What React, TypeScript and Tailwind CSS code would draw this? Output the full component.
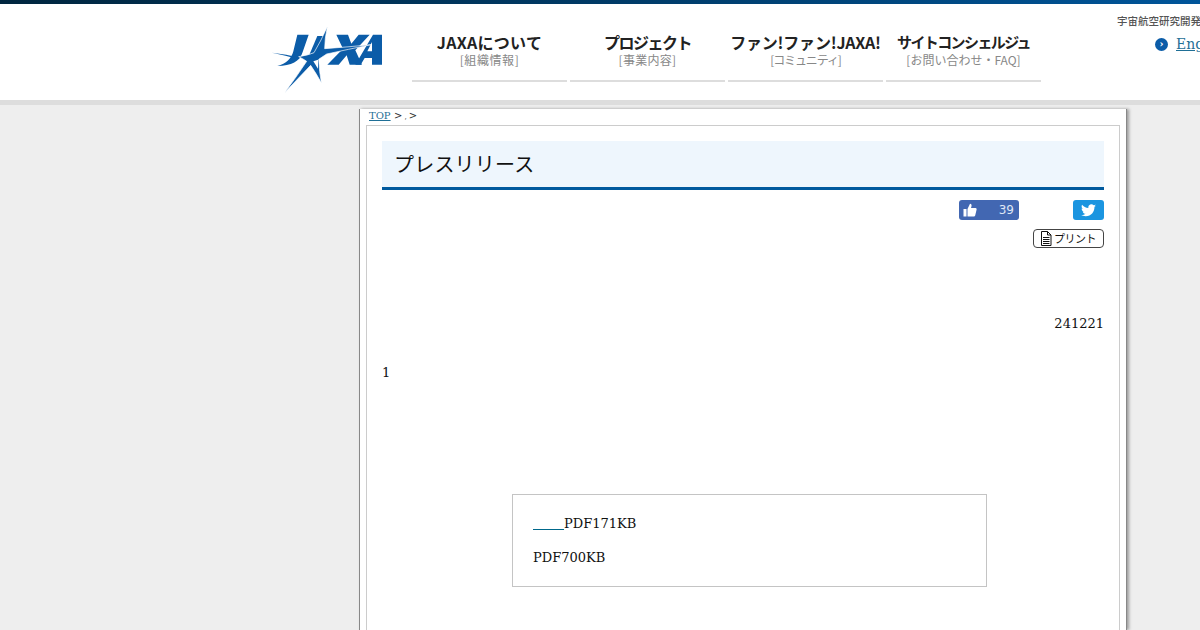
const navItems = [
  { title: "JAXAについて", sub: "[組織情報]", titleClass: "text-[16px] tracking-[0.3px]", subClass: "tracking-[0.6px]" },
  { title: "プロジェクト", sub: "[事業内容]", titleClass: "text-[16px] tracking-[-1.5px]", subClass: "tracking-[0.3px]" },
  { title: "ファン!ファン!JAXA!", sub: "[コミュニティ]", titleClass: "text-[16px] tracking-[-0.2px]", subClass: "tracking-[-1.1px]" },
  { title: "サイトコンシェルジュ", sub: "[お問い合わせ・FAQ]", titleClass: "text-[15px] tracking-[-1.6px]", subClass: "" },
];

const cjk = "font-['Noto_Sans_CJK_JP','Noto_Sans',sans-serif]";

function JaxaLogo() {
  return (
    <svg width="120" height="75" viewBox="0 0 360 225" className="block">
      <g fill="#0b5ca8" fillRule="evenodd">
        {/* J */}
        <path d="M88 38 H122 L104 90 C96 118 70 132 28 132 C55 125 70 110 76 88 Z" />
        <path d="M12 92 C40 95 70 100 95 108 L92 112 C65 104 40 98 12 92 Z" />
        {/* first A, left leg */}
        <path d="M148 42 L168 42 L166 84 L124 98 Z" />
        {/* X */}
        <path d="M205 38 H240 L250 65 L272 38 H305 L262 85 L282 128 H245 L236 100 L212 128 H178 L225 80 Z" />
        {/* second A */}
        <path d="M315 38 H342 V128 H312 V108 H290 L278 128 H262 Z M312 60 L298 88 H312 Z" />
      </g>
      <path
        d="M178 14 Q170 50 170 80 Q240 75 310 68 Q240 82 176 96 L152 112 Q154 150 160 182 Q145 155 128 130 Q90 170 50 212 Q85 165 116 118 Q105 110 92 104 Q120 100 138 92 Q160 55 178 14 Z"
        fill="#0b5ca8"
        stroke="#ffffff"
        strokeWidth="2"
      />
      <path d="M136 118 L150 113 L150 140 Z" fill="#ffffff" />
    </svg>
  );
}

function ThumbIcon() {
  return (
    <svg width="14" height="14" viewBox="0 0 14 14" fill="#ffffff">
      <rect x="0.5" y="6" width="3" height="7.5" />
      <path d="M4.500 6 L7 0.800 C8.400 0.800 8.800 2 8.500 3.200 L8 5 H12.500 C13.600 5 13.900 6 13.500 7 L12.200 12.500 C12 13.200 11.500 13.500 11 13.500 H4.500 Z" />
    </svg>
  );
}

function BirdIcon() {
  return (
    <svg width="15" height="13" viewBox="0 0 24 20" fill="#ffffff">
      <path d="M24 2.400c-.9.400-1.800.700-2.800.800 1-.600 1.800-1.600 2.200-2.700-1 .600-2 1-3.100 1.200C19.300.700 18 0 16.600 0c-2.700 0-4.900 2.200-4.900 4.900 0 .400 0 .800.100 1.100C7.700 5.800 4.100 3.900 1.700.900c-.4.700-.7 1.600-.7 2.500 0 1.700.9 3.200 2.200 4.100-.8 0-1.600-.2-2.200-.6v.1c0 2.400 1.700 4.400 3.900 4.800-.4.100-.8.200-1.300.2-.3 0-.6 0-.9-.1.600 2 2.400 3.400 4.600 3.400-1.700 1.300-3.800 2.100-6.100 2.100-.4 0-.8 0-1.200-.1C2.200 18.200 4.800 19 7.500 19c9.100 0 14-7.500 14-14v-.6c1-.7 1.800-1.600 2.500-2z" />
    </svg>
  );
}

function PrintIcon() {
  return (
    <svg width="12" height="15" viewBox="0 0 12 15" fill="none" stroke="#111111" strokeWidth="1">
      <path d="M1.500 0.500 H7.500 L11 4 V14.500 H1.500 Z" />
      <path d="M7.500 0.500 V4 H11" />
      <path d="M3 6.500 H9.500 M3 8.500 H9.500 M3 10.500 H9.500 M3 12.500 H9.500" />
    </svg>
  );
}

export default function App() {
  return (
    <div className="h-[630px] w-[1200px] overflow-hidden bg-[#eeeeee] font-['DejaVu_Serif',serif] text-[13px] text-[#111111]">
      <header className="h-[105px] border-b-[5px] border-[#dddddd] bg-white">
        <div className="h-1 bg-gradient-to-r from-[#00263f] via-[#003a66] to-[#00559a]" />
        <div className="flex w-[1300px] items-start pl-[268px]">
          <div className="mt-[18px] w-[144px]">
            <JaxaLogo />
          </div>
          <nav className={`mt-[26px] flex gap-[3px] ${cjk}`}>
            {navItems.map((item) => (
              <a key={item.title} className="block h-[52px] w-[155px] border-b-2 border-[#dddddd] text-center">
                <div className={`whitespace-nowrap leading-[24px] font-bold text-[#222222] ${item.titleClass}`}>
                  {item.title}
                </div>
                <div className={`whitespace-nowrap text-[12px] leading-[12px] text-[#888888] ${item.subClass}`}>
                  {item.sub}
                </div>
              </a>
            ))}
          </nav>
          <div className="ml-[76px] pt-[10px]">
            <div className={`whitespace-nowrap text-[10.5px] leading-[14px] font-medium text-[#555555] ${cjk}`}>
              宇宙航空研究開発機構
            </div>
            <div className="mt-[6px] flex items-center gap-[8px] pl-[38px]">
              <span className="flex h-[13px] w-[13px] items-center justify-center rounded-full bg-[#0b5ca8] text-[10px] leading-none font-bold text-white">
                ›
              </span>
              <a className="text-[14px] leading-[20px] text-[#1f6f96] underline">English</a>
            </div>
          </div>
        </div>
      </header>

      <main className="ml-[359px] mt-[4px] h-[521px] w-[768px] border-x border-x-[#888888] bg-white px-[6px] shadow-[2px_0_3px_rgba(0,0,0,0.35)]">
        <div className="h-[16px] pl-[3px] text-[11px] leading-[13px] text-[#333333]">
          <a className="text-[10px] text-[#1f6f96] underline">TOP</a>{" "}
          <span className="font-['DejaVu_Sans',sans-serif] text-[10px]">
            &gt;<span className="mx-[2px] text-[7px]">,</span>&gt;
          </span>
        </div>
        <section className="h-[520px] border border-[#cccccc] px-[15px] pt-[15px]">
          <h1 className={`h-[49px] border-b-[3px] border-[#005a9e] bg-[#eef6fd] pl-[12px] text-[20px] leading-[46px] tracking-[0.2px] font-normal text-[#111111] ${cjk}`}>
            プレスリリース
          </h1>

          <div className="mt-[10px] flex justify-end gap-[54px]">
            <div className="flex h-[20px] w-[60px] items-center justify-between rounded-[3px] bg-[#4267b2] pl-[4px] pr-[5px] font-['DejaVu_Sans',sans-serif] text-[12px] text-white">
              <ThumbIcon />
              <span className="text-[#dfe6f5]">39</span>
            </div>
            <div className="flex h-[20px] w-[31px] items-center justify-center rounded-[3px] bg-[#1b95e0]">
              <BirdIcon />
            </div>
          </div>

          <div className="mt-[9px] flex justify-end">
            <button className={`flex h-[19px] w-[71px] items-center gap-[2px] rounded-[4px] border border-[#444444] bg-white pl-[6px] text-[11px] tracking-[-0.5px] text-[#111111] ${cjk}`}>
              <PrintIcon />
              プリント
            </button>
          </div>

          <p className="mt-[66px] text-right leading-[20px]">241221</p>
          <p className="mt-[29px] leading-[20px]">1</p>

          <div className="ml-[130px] mt-[111px] h-[93px] w-[475px] border border-[#c4c4c4] pl-[20px] pt-[19px]">
            <p className="leading-[20px]">
              <a className="tracking-[0.3px] text-[#1f6f96] underline decoration-[#00688b]">
                {"\u00a0\u00a0\u00a0\u00a0\u00a0\u00a0\u00a0"}
              </a>
              PDF171KB
            </p>
            <p className="mt-[14px] leading-[20px]">PDF700KB</p>
          </div>
        </section>
      </main>
    </div>
  );
}
